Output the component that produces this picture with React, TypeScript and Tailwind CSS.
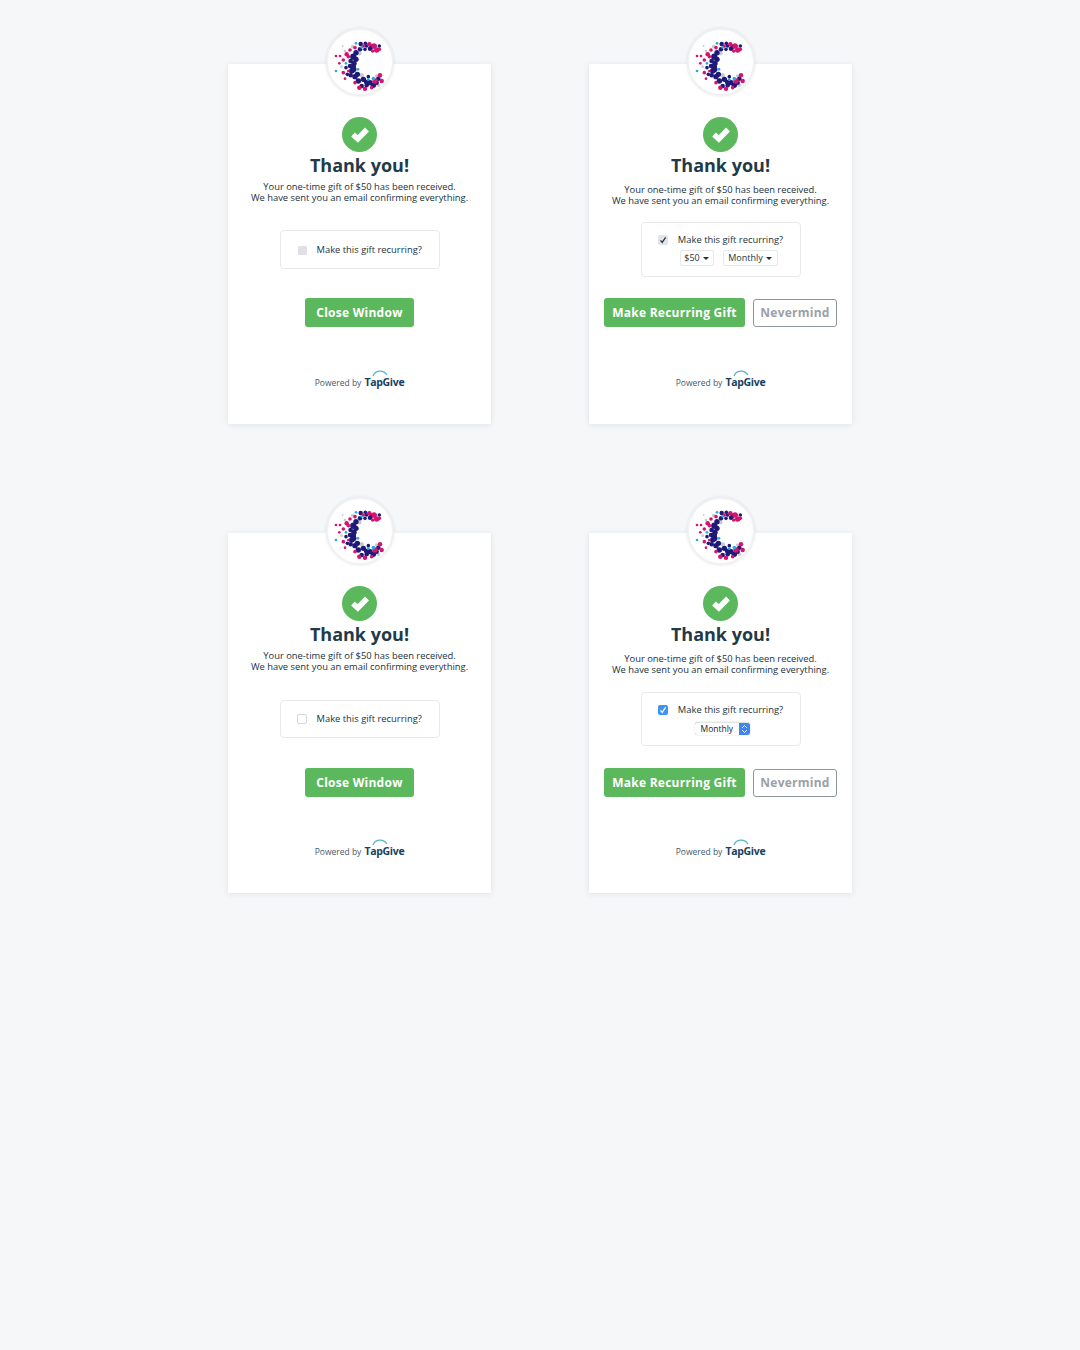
const font = { fontFamily: '"Open Sans", sans-serif' };

const navy = '#1f1a78';
const pink = '#d4146f';
const cyan = '#2aa9e0';
const grey = '#c8ccd2';

// x, y, r in a 180x165 box
const dots: [number, number, number, string][] = [
	[68, 32, 4, grey], [58, 75, 4, grey], [45, 45, 3, grey], [35, 92, 3, grey], [145, 148, 4, grey],
	[140, 120, 4, grey], [70, 72, 5, grey], [38, 30, 2, grey], [88, 52, 5, grey], [95, 118, 5, grey],
	[92, 24, 5, navy], [106, 22, 4, navy], [120, 38, 5, navy], [105, 40, 4, navy], [90, 40, 5, navy],
	[78, 50, 6, navy], [70, 62, 7, navy], [62, 75, 5, navy], [72, 82, 6, navy], [60, 90, 5, navy],
	[65, 105, 6, navy], [48, 95, 4, navy], [52, 115, 4, navy], [62, 118, 5, navy], [75, 122, 6, navy],
	[85, 135, 6, navy], [100, 130, 6, navy], [95, 150, 5, navy], [110, 148, 5, navy], [120, 140, 6, navy],
	[130, 148, 6, navy], [115, 122, 4, navy], [145, 128, 5, navy], [82, 115, 6, navy], [70, 100, 7, navy],
	[78, 70, 6, navy], [135, 30, 4, navy], [110, 30, 4, navy], [70, 90, 6, navy], [108, 138, 5, navy],
	[125, 32, 5, navy], [148, 30, 4, navy], [140, 140, 5, navy],
	[75, 35, 4, pink], [118, 25, 5, pink], [132, 30, 6, pink], [140, 42, 6, pink], [128, 45, 4, pink],
	[148, 40, 4, pink], [60, 42, 4, pink], [50, 55, 5, pink], [40, 72, 4, pink], [55, 62, 4, pink],
	[30, 60, 3, pink], [18, 60, 3, pink], [28, 82, 3, pink], [40, 110, 4, pink], [45, 128, 3, pink],
	[75, 140, 4, pink], [88, 155, 5, pink], [105, 158, 5, pink], [125, 155, 4, pink], [135, 135, 6, pink],
	[150, 118, 5, pink], [155, 135, 5, pink], [100, 30, 4, pink], [55, 105, 3, pink],
	[78, 22, 3, cyan], [95, 34, 3, cyan], [18, 105, 3, cyan], [48, 82, 3, cyan], [130, 128, 4, cyan],
	[115, 130, 3, cyan], [84, 100, 3, cyan],
];

function Logo() {
	return (
		<div className="absolute left-1/2 top-[-36px] flex h-[68px] w-[68px] -translate-x-1/2 items-center justify-center rounded-full border-2 border-[#f0f1f3] bg-white shadow-[0_0_3px_rgba(30,40,60,0.12)]">
			<svg width="60" height="55" viewBox="0 0 180 165" className="mt-[3px] shrink-0">
				{dots.map(([x, y, r, fill], index) => (
					<circle key={index} cx={x} cy={y} r={r * 1.35} fill={fill} />
				))}
			</svg>
		</div>
	);
}

function CheckBadge() {
	return (
		<div className="flex h-[35px] w-[35px] items-center justify-center rounded-full bg-[#5cb85c]">
			<svg width="20" height="18" viewBox="0 0 20 18" className="mt-[-2px]">
				<path d="M3 9.5 L7.8 14 L17 4.5" fill="none" stroke="#fff" strokeWidth="5.4" strokeLinejoin="miter" />
			</svg>
		</div>
	);
}

function Checkbox({ kind }: { kind: 'disabled' | 'empty' | 'grey' | 'blue' }) {
	if (kind === 'disabled') return <span className="h-[9px] w-[9px] rounded-[1px] bg-[#dfe1e5]" />;
	if (kind === 'empty') return <span className="h-[10px] w-[10px] rounded-[2px] border border-[#d5d8dc] bg-white" />;
	const color = kind === 'blue' ? 'bg-[#3f93f5]' : 'bg-[#e3e5e8]';
	const stroke = kind === 'blue' ? '#fff' : '#1b3340';
	return (
		<span className={`flex h-[10px] w-[10px] items-center justify-center rounded-[2px] ${color}`}>
			<svg width="8" height="8" viewBox="0 0 8 8">
				<path d="M1.5 4.4 L3.2 6.4 L6.6 1.4" fill="none" stroke={stroke} strokeWidth="1.2" />
			</svg>
		</span>
	);
}

function Dropdown({ label, width }: { label: string; width: string }) {
	return (
		<span className={`flex h-[16px] items-center justify-center gap-[3px] rounded-[2px] border border-[#e6e8ea] bg-white text-[9px] text-[#1b3340] ${width}`}>
			{label}
			<span className="mt-[1px] border-x-[3px] border-t-[3px] border-x-transparent border-t-[#1b3340]" />
		</span>
	);
}

function NativeSelect() {
	return (
		<span className="flex h-[13px] w-[55px] items-stretch overflow-hidden rounded-[3px] border-t border-[#e2e3e5] bg-white text-[8.5px] leading-[12px] text-[#1b1b1b] shadow-[0_0_1px_#999]">
			<span className="flex-1 pl-[6px]">Monthly</span>
			<span className="flex w-[11px] items-center justify-center bg-[#3f86f0]">
				<svg width="7" height="10" viewBox="0 0 7 10">
					<path d="M1.2 3.8 L3.5 1.5 L5.8 3.8 M1.2 6.2 L3.5 8.5 L5.8 6.2" fill="none" stroke="#fff" strokeWidth="1" />
				</svg>
			</span>
		</span>
	);
}

function Footer() {
	return (
		<div className="mt-auto flex h-[20px] items-center gap-[3px] text-[8.5px] text-[#46586a]">
			<span className="mt-[2px]">Powered by</span>
			<span className="relative text-[10.5px] font-bold leading-[20px] tracking-[-0.3px] text-[#17405f]">
				TapGive
				<svg width="16" height="8" viewBox="0 0 16 8" className="absolute left-[8px] top-[-3px]">
					<path d="M1 7 C3 1.5 11 0 15 6" fill="none" stroke="#5bb3cf" strokeWidth="1.3" />
				</svg>
			</span>
		</div>
	);
}

function ThankYouCard({ variant }: { variant: 'disabled' | 'empty' | 'dropdowns' | 'native' }) {
	const expanded = variant === 'dropdowns' || variant === 'native';
	return (
		<div style={font} className="relative flex h-[360px] w-[263px] flex-col items-center bg-white pb-[32px] pt-[53px] text-[#1b3340] shadow-[0_1px_6px_rgba(30,40,60,0.1)]">
			<Logo />
			<CheckBadge />
			<h1 className="h-[28px] text-[18px] font-bold leading-[27px] text-[#1f3a48]">Thank you!</h1>
			<p className={`text-center text-[9.4px] leading-[11px] ${expanded ? 'mt-[4px]' : 'mt-[1px]'}`}>
				Your one-time gift of $50 has been received.
				<br />
				We have sent you an email confirming everything.
			</p>

			{expanded ? (
				<div className={`flex w-[160px] flex-col items-center rounded-[4px] border border-[#e8e9eb] pt-[10px] ${variant === 'native' ? 'mt-[17px] h-[54px]' : 'mt-[16px] h-[55px]'}`}>
					<label className="flex items-center gap-[10px] text-[9.4px] leading-[14px]">
						<Checkbox kind={variant === 'native' ? 'blue' : 'grey'} />
						Make this gift recurring?
					</label>
					{variant === 'dropdowns' ? (
						<div className="ml-[16px] mt-[3px] flex gap-[9px]">
							<Dropdown label="$50" width="w-[34px]" />
							<Dropdown label="Monthly" width="w-[55px]" />
						</div>
					) : (
						<div className="ml-[3px] mt-[5px]">
							<NativeSelect />
						</div>
					)}
				</div>
			) : (
				<div className={`flex w-[160px] items-center gap-[10px] rounded-[4px] border border-[#e8e9eb] text-[9.4px] ${variant === 'empty' ? 'mt-[28px] h-[38px] pl-[16px]' : 'mt-[27px] h-[39px] pl-[17px] pt-[1px]'}`}>
					<Checkbox kind={variant === 'disabled' ? 'disabled' : 'empty'} />
					Make this gift recurring?
				</div>
			)}

			{expanded ? (
				<div className={`flex items-center gap-[8px] ${variant === 'native' ? 'mt-[22px]' : 'mt-[21px]'}`}>
					<button className="h-[29px] w-[141px] rounded-[3px] bg-[#5cb85c] text-[12px] font-bold tracking-[0.25px] text-white">Make Recurring Gift</button>
					<button className="h-[28px] w-[84px] rounded-[3px] border border-[#8f959d] bg-white text-[12px] font-bold tracking-[0.25px] text-[#9ba0a8]">Nevermind</button>
				</div>
			) : (
				<button className={`h-[29px] w-[109px] rounded-[3px] bg-[#5cb85c] text-[12px] font-bold tracking-[0.25px] text-white ${variant === 'empty' ? 'mt-[30px]' : 'mt-[29px]'}`}>Close Window</button>
			)}

			<Footer />
		</div>
	);
}

export default function App() {
	return (
		<div className="min-h-[1350px] bg-[#f6f7f9] pt-[64px]">
			<div className="mx-auto grid w-[624px] grid-cols-[263px_263px] justify-between gap-y-[109px]">
				<ThankYouCard variant="disabled" />
				<ThankYouCard variant="dropdowns" />
				<ThankYouCard variant="empty" />
				<ThankYouCard variant="native" />
			</div>
		</div>
	);
}
